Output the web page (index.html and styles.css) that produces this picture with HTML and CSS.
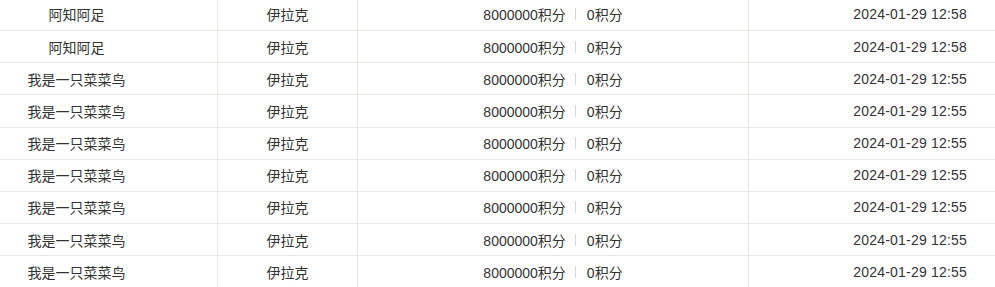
FILE: index.html
```html
<!DOCTYPE html>
<html lang="zh-CN">
<head>
<meta charset="utf-8">
<link rel="stylesheet" href="styles.css">
</head>
<body>
<div class="list">
  <div class="row"><div class="c name">阿知阿足</div><div class="c country">伊拉克</div><div class="c points"><span>8000000积分</span><i class="sep"></i><span>0积分</span></div><div class="c time">2024-01-29 12:58</div></div>
  <div class="row"><div class="c name">阿知阿足</div><div class="c country">伊拉克</div><div class="c points"><span>8000000积分</span><i class="sep"></i><span>0积分</span></div><div class="c time">2024-01-29 12:58</div></div>
  <div class="row"><div class="c name">我是一只菜菜鸟</div><div class="c country">伊拉克</div><div class="c points"><span>8000000积分</span><i class="sep"></i><span>0积分</span></div><div class="c time">2024-01-29 12:55</div></div>
  <div class="row"><div class="c name">我是一只菜菜鸟</div><div class="c country">伊拉克</div><div class="c points"><span>8000000积分</span><i class="sep"></i><span>0积分</span></div><div class="c time">2024-01-29 12:55</div></div>
  <div class="row"><div class="c name">我是一只菜菜鸟</div><div class="c country">伊拉克</div><div class="c points"><span>8000000积分</span><i class="sep"></i><span>0积分</span></div><div class="c time">2024-01-29 12:55</div></div>
  <div class="row"><div class="c name">我是一只菜菜鸟</div><div class="c country">伊拉克</div><div class="c points"><span>8000000积分</span><i class="sep"></i><span>0积分</span></div><div class="c time">2024-01-29 12:55</div></div>
  <div class="row"><div class="c name">我是一只菜菜鸟</div><div class="c country">伊拉克</div><div class="c points"><span>8000000积分</span><i class="sep"></i><span>0积分</span></div><div class="c time">2024-01-29 12:55</div></div>
  <div class="row"><div class="c name">我是一只菜菜鸟</div><div class="c country">伊拉克</div><div class="c points"><span>8000000积分</span><i class="sep"></i><span>0积分</span></div><div class="c time">2024-01-29 12:55</div></div>
  <div class="row"><div class="c name">我是一只菜菜鸟</div><div class="c country">伊拉克</div><div class="c points"><span>8000000积分</span><i class="sep"></i><span>0积分</span></div><div class="c time">2024-01-29 12:55</div></div>
</div>
</body>
</html>
```
FILE: styles.css
```css
html, body {
  margin: 0;
  padding: 0;
  background: #ffffff;
}
body {
  font-family: "Liberation Sans", "Noto Sans CJK SC", sans-serif;
  font-size: 14px;
  color: #333333;
  overflow: hidden;
}
.list {
  margin-top: -1.18px;
}
.row {
  display: grid;
  grid-template-columns: 218px 140px 391px 1fr;
  height: 32.18px;
  box-sizing: border-box;
  border-bottom: 1px solid #e8e8e4;
}
.c {
  display: flex;
  align-items: center;
  justify-content: center;
  border-right: 1px solid #e8e8e4;
  white-space: nowrap;
}
.name {
  padding-right: 64px;
}
.time {
  justify-content: flex-end;
  padding-right: 28px;
  border-right: none;
  letter-spacing: 0.2px;
}
.sep {
  display: inline-block;
  width: 1px;
  height: 12px;
  background: #d6d6d6;
  margin: 0 11px 0 9px;
}
```
